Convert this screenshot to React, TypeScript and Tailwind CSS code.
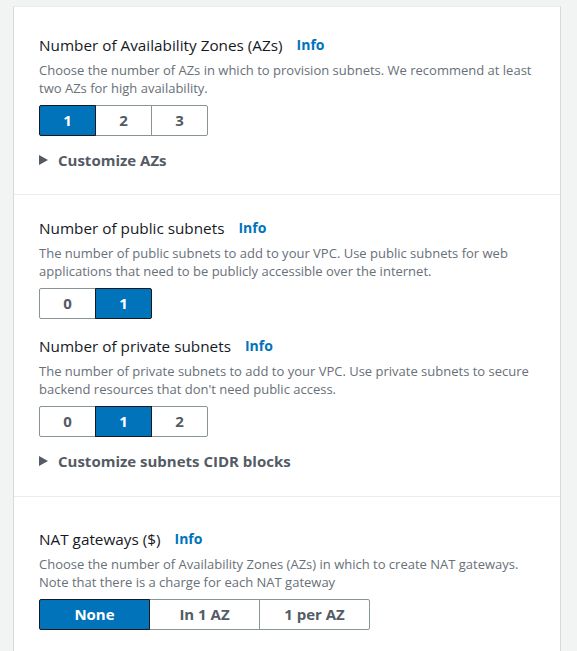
import React from 'react';

type SegProps = { options: string[]; selected: number; width: string };

const Segmented: React.FC<SegProps> = ({ options, selected, width }) => (
  <div className="flex">
    {options.map((opt, i) => {
      const active = i === selected;
      const first = i === 0;
      const last = i === options.length - 1;
      return (
        <button
          key={opt}
          className={`${width} relative flex h-[31px] items-center justify-center border text-[15px] font-bold ${
            first ? 'rounded-l-[2px]' : '-ml-px'
          } ${last ? 'rounded-r-[2px]' : ''} ${
            active
              ? 'z-10 border-[#16191f] bg-[#0073bb] text-white'
              : 'border-[#879596] bg-white text-[#545b64]'
          }`}
        >
          {opt}
        </button>
      );
    })}
  </div>
);

const Field: React.FC<{ label: string; children: React.ReactNode; description: React.ReactNode }> = ({
  label,
  description,
  children,
}) => (
  <div>
    <div className="flex h-[22px] items-center text-[15.3px] leading-[22px] text-[#16191f]">
      <span>{label}</span>
      <span className="ml-[14px] text-[14px] font-bold text-[#0073bb]">Info</span>
    </div>
    <p className="mt-[5px] text-[13px] leading-[18px] text-[#687078]">{description}</p>
    <div className="mt-[8px]">{children}</div>
  </div>
);

const Expander: React.FC<{ label: string }> = ({ label }) => (
  <div className="flex h-[20px] items-center text-[15px] font-bold text-[#545b64]">
    <svg width="9" height="10" viewBox="0 0 9 10" className="mr-[10px]">
      <path d="M0 0 L9 5 L0 10 Z" fill="#545b64" />
    </svg>
    {label}
  </div>
);

export default function App() {
  return (
    <div className="flex h-[651px] w-[577px] overflow-hidden bg-[#f2f3f3]" style={{ fontFamily: '"Open Sans", "Noto Sans", sans-serif' }}>
      <div className="ml-[13px] mt-[6px] w-[548px] border-x border-t border-x-[#d5dbdb] border-t-[#eaeded] bg-white">
        {/* AZs */}
        <section className="px-[25px] pb-[24px] pt-[27px]">
          <Field
            label="Number of Availability Zones (AZs)"
            description="Choose the number of AZs in which to provision subnets. We recommend at least two AZs for high availability."
          >
            <Segmented options={['1', '2', '3']} selected={0} width="w-[57px]" />
          </Field>
          <div className="mt-[14px]">
            <Expander label="Customize AZs" />
          </div>
        </section>

        {/* Subnets */}
        <section className="border-t border-[#eaeded] px-[25px] pb-[25px] pt-[22px]">
          <Field
            label="Number of public subnets"
            description="The number of public subnets to add to your VPC. Use public subnets for web applications that need to be publicly accessible over the internet."
          >
            <Segmented options={['0', '1']} selected={1} width="w-[57px]" />
          </Field>
          <div className="mt-[16px]">
            <Field
              label="Number of private subnets"
              description="The number of private subnets to add to your VPC. Use private subnets to secure backend resources that don't need public access."
            >
              <Segmented options={['0', '1', '2']} selected={1} width="w-[57px]" />
            </Field>
          </div>
          <div className="mt-[14px]">
            <Expander label="Customize subnets CIDR blocks" />
          </div>
        </section>

        {/* NAT */}
        <section className="border-t border-[#eaeded] px-[25px] pt-[31px]">
          <Field
            label="NAT gateways ($)"
            description="Choose the number of Availability Zones (AZs) in which to create NAT gateways. Note that there is a charge for each NAT gateway"
          >
            <Segmented options={['None', 'In 1 AZ', '1 per AZ']} selected={0} width="w-[111px]" />
          </Field>
        </section>
      </div>
    </div>
  );
}
